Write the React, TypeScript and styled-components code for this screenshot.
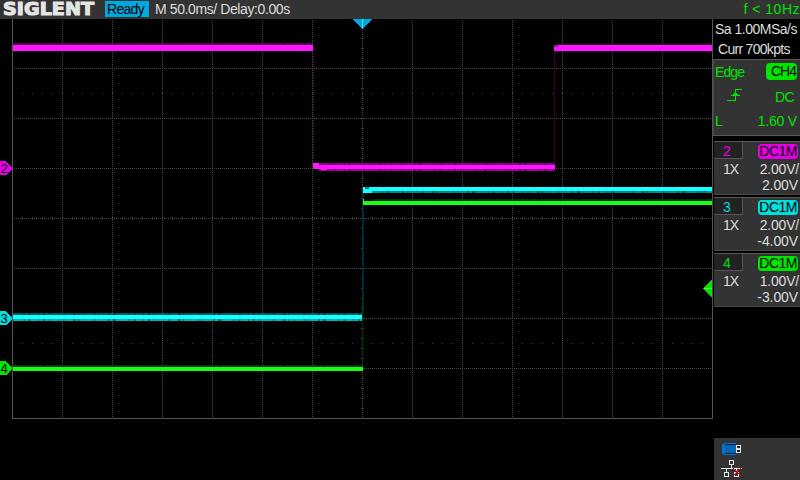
import React from "react";
import styled, { createGlobalStyle } from "styled-components";

const Global = createGlobalStyle`
  * { box-sizing: border-box; }
  body { margin: 0; background: #000; overflow: hidden; }
`;

const Screen = styled.div`
  width: 800px;
  height: 480px;
  background: #000;
  color: #dcdcdc;
  font: 14px/16px "Liberation Sans", Arial, sans-serif;
  display: flex;
  flex-direction: column;
  overflow: hidden;
  white-space: pre;
`;

const Header = styled.header`
  height: 19px;
  flex: none;
  background: #333;
  display: flex;
  align-items: center;
`;

const Logo = styled.svg`
  display: block;
  width: 105px;
  height: 19px;
`;

const Status = styled.div`
  width: 44px;
  height: 16px;
  margin-bottom: 1px;
  padding-left: 2px;
  background: #00a8e0;
  color: #000;
  letter-spacing: -0.7px;
`;

const Label = styled.span<{ $spacing?: number }>`
  letter-spacing: ${(p) => p.$spacing ?? 0}px;
`;

const Timebase = styled.div`
  margin-left: 6px;
  margin-bottom: 1px;
`;

const Frequency = styled.div`
  margin-left: auto;
  margin-bottom: 1px;
  color: #00e400;
  letter-spacing: 0.5px;
`;

const Body = styled.div`
  flex: 1;
  display: flex;
  min-height: 0;
`;

const Plot = styled.svg`
  display: block;
  width: 713px;
  height: 461px;
  flex: none;
`;

const Sidebar = styled.aside`
  width: 87px;
  display: flex;
  flex-direction: column;
`;

const Acquisition = styled.div`
  height: 40px;
  display: flex;
  flex-direction: column;
  padding: 2px 0 0 2px;
  gap: 4px;
`;

const AcqLine = styled.div<{ $indent?: number }>`
  padding-left: ${(p) => p.$indent ?? 0}px;
`;

const Trigger = styled.section`
  height: 77px;
  background: #333;
  border-top: 1px solid #585858;
  border-bottom: 1px solid #585858;
  border-left: 1px solid #444;
  color: #00e400;
  padding: 3px 3px 0 1px;
  display: flex;
  flex-direction: column;
  gap: 8px;
`;

const Row = styled.div`
  display: flex;
  justify-content: space-between;
  align-items: center;
  height: 17px;

  &:last-child {
    height: 15px;
  }
`;

const Badge = styled.div<{ $color: string; $width: number }>`
  width: ${(p) => p.$width}px;
  height: ${(p) => (p.$width < 35 ? 17 : 15)}px;
  line-height: ${(p) => (p.$width < 35 ? 17 : 15)}px;
  border-radius: 4px;
  background: ${(p) => p.$color};
  color: #000;
  text-align: right;
  padding-right: 1px;
`;

const EdgeIcon = styled.svg`
  display: block;
  width: 18px;
  height: 14px;
  margin: 0 0 3px 11px;
`;

const Channels = styled.div`
  margin-top: 5px;
  display: flex;
  flex-direction: column;
  gap: 2px;
`;

const ChannelBox = styled.section`
  height: 54px;
  margin-left: 1px;
  background: #333;
  border-top: 1px solid #585858;
  border-bottom: 1px solid #484848;
`;

const ChannelTop = styled.div`
  height: 17px;
  display: flex;
  justify-content: space-between;
  align-items: flex-end;
  padding-right: 2px;
`;

const Tab = styled.div<{ $color: string }>`
  width: 29px;
  height: 17px;
  background: #222;
  border-right: 1px solid #555;
  border-bottom: 1px solid #555;
  color: ${(p) => p.$color};
  padding: 1px 0 0 9px;
`;

const Scale = styled.div`
  height: 18px;
  display: flex;
  justify-content: space-between;
  align-items: center;
  padding: 2px 1px 0 9px;
`;

const Offset = styled.div`
  text-align: right;
  line-height: 16px;
  height: 16px;
  padding-right: 2px;
  letter-spacing: -0.1px;
`;

const Devices = styled.footer`
  margin: auto 0 0 1px;
  height: 42px;
  background: #333;
  padding: 5px 0 0 7px;
`;

const DeviceIcons = styled.svg`
  display: block;
  width: 24px;
  height: 36px;
`;

const channels = [
  { id: "2", color: "#e400e4", scale: "2.00V/", offset: "2.00V" },
  { id: "3", color: "#00dede", scale: "2.00V/", offset: "-4.00V" },
  { id: "4", color: "#00e400", scale: "1.00V/", offset: "-3.00V" },
];

const seq = (start: number, end: number, step: number) =>
  Array.from({ length: Math.floor((end - start) / step) + 1 }, (_, i) => start + i * step);

const columns = seq(62, 662, 50);
const rows = seq(68, 368, 50);

function Graticule() {
  return (
    <g fill="#404040" stroke="none">
      {columns.map((x) => (
        <path key={x} d={`M${x + 0.5} 20V418`} stroke="#484848" strokeDasharray="1 1" />
      ))}
      {rows.map((y) => (
        <path key={y} d={`M14 ${y + 0.5}H712`} stroke="#484848" strokeDasharray="1 1" />
      ))}
      {seq(22, 702, 10).map((x) => (
        <g key={x}>
          <rect x={x} y={217} width={1} height={3} />
          <rect x={x} y={93} width={1} height={1} />
          <rect x={x} y={343} width={1} height={1} />
        </g>
      ))}
      {columns.map((x) => (
        <g key={x}>
          <rect x={x} y={92} width={1} height={3} />
          <rect x={x} y={342} width={1} height={3} />
          <rect x={x} y={216} width={1} height={5} />
        </g>
      ))}
      {seq(28, 408, 10).map((y) => (
        <rect key={y} x={361} y={y} width={3} height={1} />
      ))}
      <path d="M12 19h1v399h699V19h1v400H12z" fill="#555" />
    </g>
  );
}

function Noise({ x, y, end, fill, h = 2 }: { x: number; y: number; end: number; fill: string; h?: number }) {
  const dark = seq(x, end - 4, 7).map((v, i) => ({ v: v + ((i * 13) % 5), w: 1 + ((i * 7) % 3), o: 0.12 + ((i * 11) % 5) * 0.07 }));
  return (
    <g>
      <rect x={x} y={y} width={end - x} height={h} fill={fill} />
      {dark.map((d) => (
        <rect key={d.v} x={d.v} y={y} width={d.w} height={h} fill="#000" opacity={d.o} />
      ))}
    </g>
  );
}

function Traces() {
  return (
    <g>
      <rect x={313} y={51} width={1} height={114} fill="#2a062a" />
      <rect x={554} y={51} width={1} height={114} fill="#300530" />
      <rect x={362} y={191} width={2} height={123} fill="#002c30" />
      <rect x={362} y={300} width={1} height={67} fill="#003c00" />

      <Noise x={13} y={43} end={313} fill="#580058" />
      <rect x={13} y={45} width={300} height={6} fill="#ff18ff" />
      <Noise x={319} y={163} end={555} fill="#900090" />
      <Noise x={319} y={169} end={555} fill="#a800a8" />
      <rect x={313} y={163} width={6} height={2} fill="#ff18ff" />
      <rect x={321} y={169} width={5} height={1} fill="#ff18ff" />
      <rect x={313} y={165} width={242} height={4} fill="#ff18ff" />
      <Noise x={560} y={43} end={712} fill="#240024" />
      <Noise x={554} y={51} end={712} fill="#280028" h={1} />
      <rect x={554} y={45} width={158} height={6} fill="#ff18ff" />
      <rect x={554} y={45} width={4} height={2} fill="#c000c0" />

      <Noise x={13} y={313} end={362} fill="#006068" />
      <Noise x={13} y={319} end={362} fill="#00b8b8" />
      <rect x={13} y={315} width={349} height={4} fill="#18ffff" />
      <Noise x={372} y={191} end={712} fill="#009090" />
      <rect x={363} y={191} width={9} height={2} fill="#18ffff" />
      <rect x={363} y={187} width={349} height={4} fill="#18ffff" />
      <rect x={365} y={187} width={4} height={2} fill="#008888" />

      <Noise x={13} y={365} end={363} fill="#083c08" />
      <rect x={13} y={367} width={350} height={4} fill="#18ff18" />
      <Noise x={373} y={199} end={712} fill="#083408" />
      <rect x={363} y={201} width={349} height={4} fill="#18ff18" />
      <rect x={363} y={199} width={1} height={2} fill="#18ff18" />
    </g>
  );
}

function Marker({ y, color, id }: { y: number; color: string; id: string }) {
  return (
    <g>
      <path d={`M0 ${y - 7}H6L12 ${y}V${y + 1}L6 ${y + 7}H0z`} fill={color} />
      <text x={0.5} y={y + 5} fontSize={13} fill="#000">{id}</text>
    </g>
  );
}

export default function App() {
  return (
    <Screen>
      <Global />
      <Header>
        <Logo viewBox="0 0 105 19">
          <text
            x="3" y="15.3" textLength="91" lengthAdjust="spacingAndGlyphs"
            fontFamily="'DejaVu Sans', sans-serif" fontWeight="700" fontSize="17.6"
            fill="#e4e4e4" stroke="#e4e4e4" strokeWidth="1.1"
          >SIGLENT</text>
        </Logo>
        <Status>Ready</Status>
        <Timebase><Label $spacing={-0.4}>M 50.0ms/ Delay:0.00s</Label></Timebase>
        <Frequency>f &lt; 10Hz</Frequency>
      </Header>
      <Body>
        <Plot viewBox="0 19 713 461" shapeRendering="crispEdges">
          <Graticule />
          <Traces />
          <path d="M353 19H372V20L363 28V29H362V28L353 20z" fill="#00a8e0" />
          <rect x={362} y={19} width={1} height={9} fill="#58d8ff" />
          <path d="M712 280V297L703 289V288z" fill="#00e400" />
          <rect x={704} y={288} width={8} height={1} fill="#40f440" />
          <Marker y={168} color="#e400e4" id="2" />
          <Marker y={318} color="#00dede" id="3" />
          <Marker y={368} color="#00e400" id="4" />
        </Plot>
        <Sidebar>
          <Acquisition>
            <AcqLine><Label $spacing={-0.5}>Sa 1.00MSa/s</Label></AcqLine>
            <AcqLine $indent={3}><Label $spacing={-0.7}>Curr 700kpts</Label></AcqLine>
          </Acquisition>
          <Trigger>
            <Row>
              <Label $spacing={-0.9}>Edge</Label>
              <Badge $color="#00e400" $width={31}><Label $spacing={-1}>CH4</Label></Badge>
            </Row>
            <Row>
              <EdgeIcon viewBox="0 0 18 14" shapeRendering="crispEdges">
                <path d="M1 12.5H9.5V1.5H16" fill="none" stroke="#00e400" />
                <path d="M9 4h1v1h1v1h1v1h2v1H5V7h2V6h1V5h1z" fill="#00e400" />
              </EdgeIcon>
              <Label $spacing={-0.7}>DC </Label>
            </Row>
            <Row>
              <span>L</span>
              <Label $spacing={-0.2}>1.60 V</Label>
            </Row>
          </Trigger>
          <Channels>
            {channels.map((c) => (
              <ChannelBox key={c.id}>
                <ChannelTop>
                  <Tab $color={c.color}>{c.id}</Tab>
                  <Badge $color={c.color} $width={40}><Label $spacing={-0.5}>DC1M</Label></Badge>
                </ChannelTop>
                <Scale>
                  <Label $spacing={-1}>1X</Label>
                  <Label $spacing={-0.2}>{c.scale}</Label>
                </Scale>
                <Offset>{c.offset}</Offset>
              </ChannelBox>
            ))}
          </Channels>
          <Devices>
            <DeviceIcons viewBox="0 0 24 36" shapeRendering="crispEdges">
              <path d="M3 0H15V12H3V11H2V10H1V2H2V1H3z" fill="#0078f0" />
              <path d="M4 1H15V11H4V10H3V2H4z" fill="#001838" />
              <rect x="3" y="2" width="12" height="8" fill="#0068b0" />
              <path d="M15 2H20V10H15z" fill="#e4e4e4" />
              <path d="M16 3H19V5H16zM16 7H19V9H16z" fill="#222" />
              <g fill="none" stroke="#e4e4e4">
                <rect x="8.5" y="17.5" width="4" height="4" />
                <path d="M10.5 22V25M0 25.5H21M5.5 26V29M15.5 26V29" />
                <rect x="3.5" y="29.5" width="4" height="4" />
                <rect x="13.5" y="29.5" width="4" height="4" />
              </g>
              <g fill="#e00000">
                {seq(0, 9, 1).map((i) => (
                  <React.Fragment key={i}>
                    <rect x={11 + i} y={24 + i} width={1} height={1} />
                    <rect x={20 - i} y={24 + i} width={1} height={1} />
                  </React.Fragment>
                ))}
              </g>
            </DeviceIcons>
          </Devices>
        </Sidebar>
      </Body>
    </Screen>
  );
}
